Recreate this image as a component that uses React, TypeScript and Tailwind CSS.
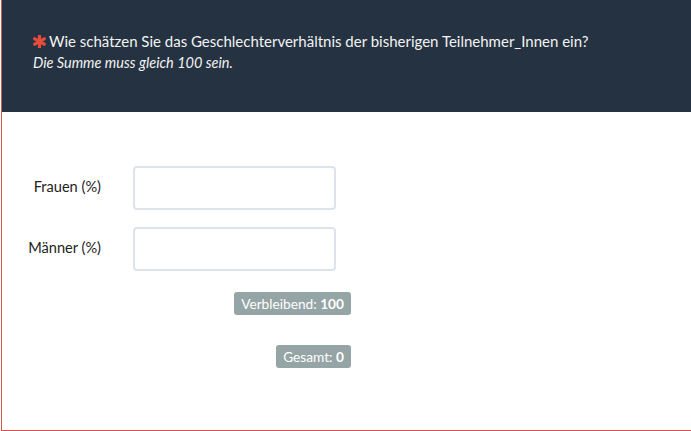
import React from 'react';

const Asterisk = () => (
  <svg width="13" height="13" viewBox="0 0 24 24" className="mr-[3px] shrink-0">
    <g stroke="#e74c3c" strokeWidth="6" strokeLinecap="round">
      <line x1="12" y1="2" x2="12" y2="22" />
      <line x1="3.3" y1="7" x2="20.7" y2="17" />
      <line x1="3.3" y1="17" x2="20.7" y2="7" />
    </g>
  </svg>
);

const Field = ({ label }: { label: string }) => (
  <div className="flex items-center h-[44px]">
    <label className="w-[99px] pb-[3px] text-right text-[14.6px] text-[#222]">{label}</label>
    <input
      type="text"
      className="ml-[32px] w-[203px] h-[44px] border-2 border-[#dde3ea] rounded-[4px] outline-none px-3"
    />
  </div>
);

const Badge = ({ text, value }: { text: string; value: number }) => (
  <div className="w-[349px] flex justify-end">
    <span className="bg-[#95a5a6] text-white text-[13.7px] leading-[23px] h-[23px] px-[7px] rounded-[3px]">
      {text} <b>{value}</b>
    </span>
  </div>
);

export default function App() {
  return (
    <div className="ml-px w-[690px] h-[431px] border-l border-b border-[#d9534f] flex flex-col font-['Lato',sans-serif]">
      <div className="h-[112px] bg-[#253241] pl-[31px] pt-[31px] text-[#f2f2f2]">
        <p className="flex items-center text-[15px] leading-[20px]">
          <Asterisk />
          Wie schätzen Sie das Geschlechterverhältnis der bisherigen Teilnehmer_Innen ein?
        </p>
        <p className="italic text-[14.5px] leading-[22px] pt-px">Die Summe muss gleich 100 sein.</p>
      </div>
      <div className="flex-1 bg-white pt-[54px]">
        <Field label="Frauen (%)" />
        <div className="mt-[17px]">
          <Field label="Männer (%)" />
        </div>
        <div className="mt-[21px]">
          <Badge text="Verbleibend:" value={100} />
        </div>
        <div className="mt-[30px]">
          <Badge text="Gesamt:" value={0} />
        </div>
      </div>
    </div>
  );
}
